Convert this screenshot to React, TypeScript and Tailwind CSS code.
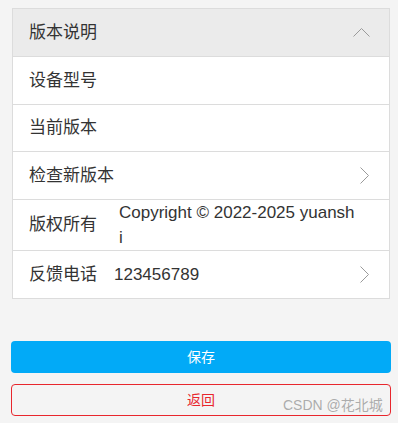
import React from 'react';

const font = { fontFamily: '"Liberation Sans", "Noto Sans CJK SC", sans-serif' };

function ChevronRight() {
  return (
    <svg width="10" height="18" viewBox="0 0 10 18" className="shrink-0">
      <polyline points="0.5,0.5 8.5,8.5 0.5,16.5" fill="none" stroke="#9a9a9a" strokeWidth="1" />
    </svg>
  );
}

function ChevronUp() {
  return (
    <svg width="18" height="10" viewBox="0 0 18 10" className="shrink-0">
      <polyline points="0.5,8.5 8.5,0.5 16.5,8.5" fill="none" stroke="#9a9a9a" strokeWidth="1" />
    </svg>
  );
}

export default function App() {
  return (
    <div className="relative w-[398px] h-[423px] bg-[#f4f4f4] overflow-hidden text-[#333]" style={font}>
      <div className="pt-2 pl-3 pr-2">
        {/* Version info card */}
        <div className="border border-[#dcdcdc] bg-white text-[17px]">
          <div className="flex items-center justify-between h-[48px] px-4 bg-[#ebebeb] border-b border-[#dcdcdc]">
            <span>版本说明</span>
            <span className="mr-[2px]"><ChevronUp /></span>
          </div>
          <div className="flex items-center h-[48px] px-4 border-b border-[#dcdcdc]">
            <span>设备型号</span>
          </div>
          <div className="flex items-center h-[47px] px-4 border-b border-[#dcdcdc]">
            <span>当前版本</span>
          </div>
          <div className="flex items-center justify-between h-[48px] px-4 border-b border-[#dcdcdc]">
            <span>检查新版本</span>
            <span className="mr-[3px]"><ChevronRight /></span>
          </div>
          <div className="flex items-center h-[51px] px-4 border-b border-[#dcdcdc]">
            <span className="shrink-0">版权所有</span>
            <span className="ml-[22px] w-[237px] leading-[25px] break-all">Copyright © 2022-2025 yuanshi</span>
          </div>
          <div className="flex items-center h-[47px] px-4">
            <span className="shrink-0">反馈电话</span>
            <span className="ml-[17px] flex-1">123456789</span>
            <span className="mr-[3px]"><ChevronRight /></span>
          </div>
        </div>
      </div>

      {/* Actions */}
      <div className="flex flex-col gap-[11px] mt-[42px] pl-[11px] pr-[7px]">
        <button className="h-[32px] rounded-[4px] bg-[#02aaf7] text-white text-[14px]">保存</button>
        <button className="h-[32px] rounded-[4px] border border-[#e8262d] text-[#e8262d] text-[14px]">返回</button>
      </div>

      <div className="absolute left-[283px] top-[395px] text-[14px] text-[#999]/80 pointer-events-none">CSDN @花北城</div>
    </div>
  );
}
